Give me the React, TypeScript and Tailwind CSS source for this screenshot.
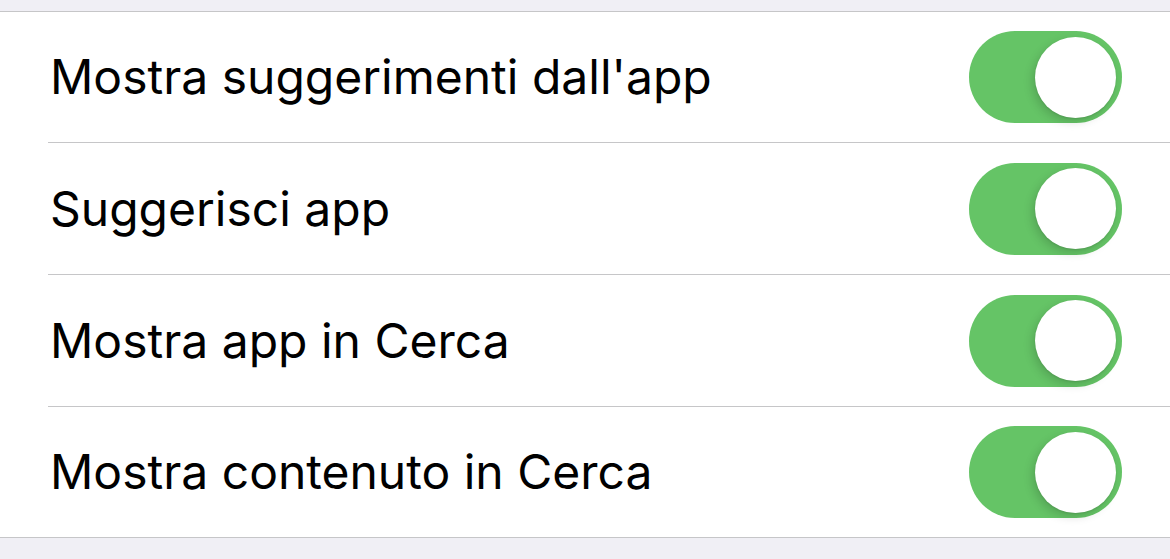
const ROWS = [
  { label: "Mostra suggerimenti dall'app", cls: 'h-[131px] border-b' },
  { label: 'Suggerisci app', cls: 'h-[132px] border-b' },
  { label: 'Mostra app in Cerca', cls: 'h-[132px] border-b' },
  { label: 'Mostra contenuto in Cerca', cls: 'h-[130px]' },
];

function Toggle() {
  return (
    <div className="flex h-[92px] w-[153px] shrink-0 items-center justify-end rounded-full bg-[#65c466] pr-[6px]">
      <div className="h-[81px] w-[81px] rounded-full bg-white shadow-[-3px_4px_10px_rgba(0,0,0,0.15),0_1px_2px_rgba(0,0,0,0.1)]" />
    </div>
  );
}

export default function App() {
  return (
    <div className="flex h-[559px] w-[1170px] flex-col bg-[#f0eff5] pt-[11px] font-['Inter',sans-serif]">
      <div className="border-y border-[#c6c6c8] bg-white">
        {ROWS.map((row) => (
          <div key={row.label} className="pl-[48px]">
            <div className={`flex items-center justify-between border-[#c6c6c8] pr-[48px] ${row.cls}`}>
              <span className="pl-[2px] text-[48px] text-black">{row.label}</span>
              <Toggle />
            </div>
          </div>
        ))}
      </div>
    </div>
  );
}
